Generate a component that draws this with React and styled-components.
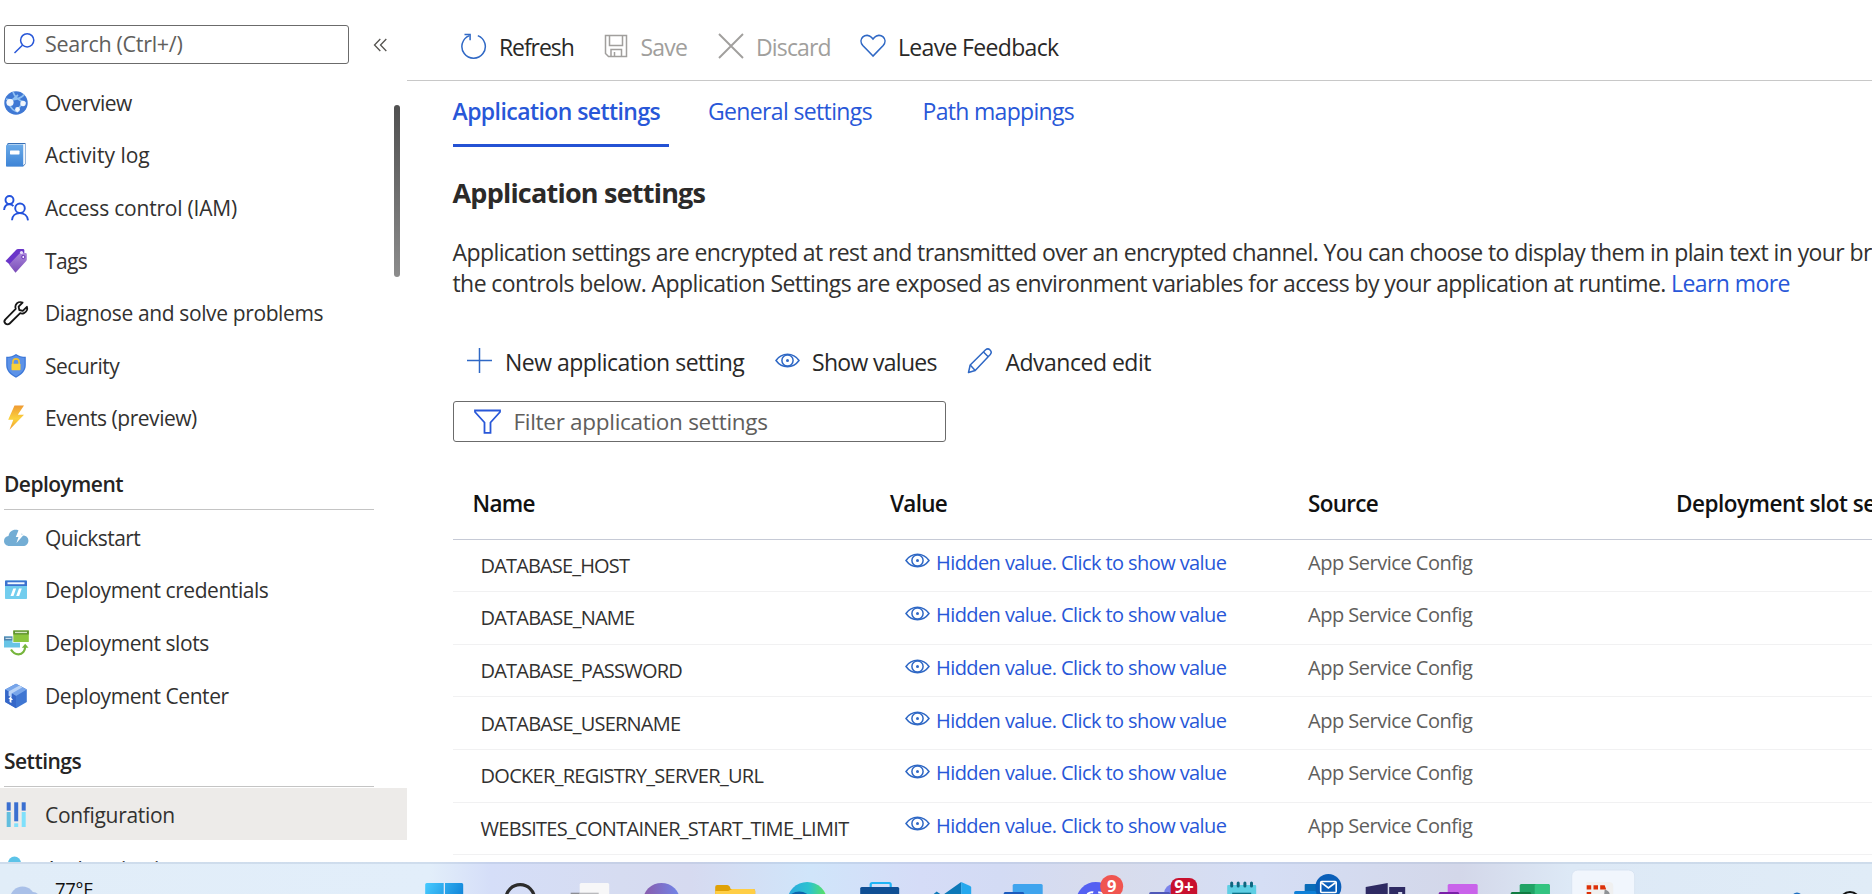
import React from "react";
import styled, { createGlobalStyle } from "styled-components";

const BLUE = "#2857d8";
const ICON_BLUE = "#2f68c5";

const Global = createGlobalStyle`
  * { box-sizing: border-box; }
  html, body { margin: 0; padding: 0; background: #fff; overflow: hidden; }
  body { font-family: "Open Sans", "Noto Sans", sans-serif; color: #323130; }
  svg { display: block; flex: none; }
`;

const Screen = styled.div`
  width: 1872px;
  height: 894px;
  display: flex;
  flex-direction: column;
  overflow: hidden;
`;
const Portal = styled.div`
  display: flex;
  height: 862px;
  overflow: hidden;
`;

/* ---------- sidebar ---------- */
const Sidebar = styled.nav`
  width: 406.5px;
  flex: none;
  display: flex;
  flex-direction: column;
`;
const SearchRow = styled.div`
  display: flex;
  align-items: center;
  gap: 24px;
  padding: 25px 0 0 4px;
  height: 64px;
  flex: none;
`;
const SearchBox = styled.div`
  width: 345px;
  height: 39px;
  border: 1.5px solid #6b6b6b;
  border-radius: 3px;
  display: flex;
  align-items: center;
  gap: 9.5px;
  padding: 0 0 1.5px 7.5px;
  font-size: 21.5px;
  letter-spacing: -0.014em;
  color: #605e5c;
`;
const MenuArea = styled.div`
  display: flex;
  flex: 1;
  min-height: 0;
  padding-top: 12.6px;
  overflow: hidden;
`;
const Menu = styled.div`
  width: 406.5px;
  flex: none;
`;
const ScrollThumb = styled.div`
  flex: none;
  width: 6px;
  height: 172px;
  margin: 28.5px 0 0 -12.5px;
  border-radius: 3px;
  background: linear-gradient(#505050, #8c8c8c);
`;
const MenuItem = styled.div`
  height: 52.6px;
  display: flex;
  align-items: center;
  gap: 17px;
  padding-left: 4px;
  padding-top: ${(p) => p.$drop || 0}px;
  font-size: 21px;
  letter-spacing: ${(p) => p.$ls || "-0.018em"};
  white-space: nowrap;
  background: ${(p) => (p.$active ? "#edebe9" : "transparent")};
`;
const MenuHeading = styled.div`
  height: ${(p) => p.$h}px;
  width: 370px;
  margin: 0 0 ${(p) => p.$gap}px 4px;
  padding-top: 25.5px;
  border-bottom: 1.5px solid #c4c4c4;
  font-size: 21px;
  line-height: 28px;
  font-weight: 600;
  letter-spacing: -0.025em;
  color: #252423;
`;

/* ---------- main ---------- */
const Main = styled.main`
  flex: 1;
  min-width: 0;
  overflow: hidden;
`;
const Toolbar = styled.div`
  height: 80.5px;
  border-bottom: 1.5px solid #c8c8c8;
  padding: 14px 0 0 53px;
  display: flex;
  align-items: center;
  svg { margin-bottom: 1.5px; }
`;
const Command = styled.div`
  display: flex;
  align-items: center;
  gap: ${(p) => p.$gap || 12.5}px;
  width: ${(p) => p.$w}px;
  flex: none;
  font-size: 23px;
  letter-spacing: ${(p) => p.$ls};
  white-space: nowrap;
  color: ${(p) => (p.$disabled ? "#a19f9d" : "#292827")};
`;
const Content = styled.div`
  padding-left: 46px;
`;
const Tabs = styled.div`
  display: flex;
  height: 66.5px;
`;
const Tab = styled.div`
  width: ${(p) => p.$w}px;
  margin-right: ${(p) => p.$mr || 0}px;
  padding-top: 14.5px;
  line-height: 32px;
  font-size: 23px;
  white-space: nowrap;
  color: ${BLUE};
  font-weight: ${(p) => (p.$active ? 600 : 400)};
  letter-spacing: ${(p) => p.$ls};
  border-bottom: 3px solid ${(p) => (p.$active ? "#2452d4" : "transparent")};
`;
const Title = styled.h2`
  margin: 26px 0 0;
  font-size: 27px;
  line-height: 40px;
  font-weight: 700;
  letter-spacing: -0.029em;
  color: #2b2a29;
`;
const Description = styled.div`
  margin-top: 24px;
  font-size: 23px;
  line-height: 30.8px;
  letter-spacing: -0.0256em;
  white-space: nowrap;
`;
const Link = styled.a`
  color: ${BLUE};
`;
const Actions = styled.div`
  display: flex;
  align-items: center;
  height: 40px;
  margin-top: 43px;
  padding-left: 14px;
  svg { margin-bottom: 1.5px; }
`;
const FilterBox = styled.div`
  width: 493.5px;
  height: 41px;
  margin-top: 19px;
  border: 1.5px solid #6b6b6b;
  border-radius: 3px;
  display: flex;
  align-items: center;
  gap: 13px;
  padding-left: 20px;
  font-size: 22.5px;
  letter-spacing: -0.013em;
  color: #605e5c;
`;
const Row = styled.div`
  display: grid;
  grid-template-columns: 437.5px 418px 368px 1fr;
  align-items: center;
  height: 52.6px;
  border-bottom: 1.5px solid #f1f1f2;
  font-size: 20px;
  white-space: nowrap;
`;
const HeadRow = styled(Row)`
  height: 98px;
  padding-top: 27px;
  border-bottom: 1.5px solid #c6cad6;
  font-size: 22.5px;
  font-weight: 600;
  letter-spacing: -0.032em;
  color: #111;
`;
const HeadName = styled.div`
  padding-left: 20px;
`;
const HeadSlot = styled.div`
  letter-spacing: -0.022em;
`;
const NameCell = styled.div`
  padding-left: 28px;
  letter-spacing: ${(p) => p.$ls};
`;
const ValueCell = styled.div`
  display: flex;
  align-items: center;
  gap: 6.5px;
  padding: 0 0 6px 14.5px;
  color: ${BLUE};
  letter-spacing: -0.029em;
  svg { margin-bottom: 3px; }
`;
const SourceCell = styled.div`
  padding-bottom: 6px;
  letter-spacing: -0.0245em;
  color: #605e5c;
`;

/* ---------- taskbar ---------- */
const Taskbar = styled.footer`
  height: 32px;
  display: flex;
  overflow: hidden;
  background: linear-gradient(90deg, #e1edf8 0, #e2eefa 430px, #d5def8 490px, #d6dcf1 620px, #d6daf0 690px,
    #d0e5fa 810px, #d5dcf7 920px, #d3dbf4 1000px, #d8dcec 1110px, #d5def5 1260px, #d3d7e9 1460px, #dde9f6 1570px, #e0ecf7 1872px);
  box-shadow: inset 0 2px 0 rgba(150, 170, 200, 0.25);
`;
const Weather = styled.div`
  width: 408.3px;
  flex: none;
  display: flex;
  gap: 17px;
  padding-left: 11px;
  font-size: 18.5px;
  line-height: 24px;
  letter-spacing: -0.015em;
  color: #111;
`;
const Temperature = styled.span`
  padding-top: 15px;
`;
const Apps = styled.div`
  display: flex;
  flex: none;
`;
const Tray = styled.div`
  flex: 1;
  display: flex;
  justify-content: flex-end;
  padding-right: 10px;
`;

/* ---------- line icons ---------- */
const Search = () => (
  <svg width="23" height="23" viewBox="0 0 23 23" fill="none" stroke={BLUE} strokeWidth="1.5">
    <circle cx="14.2" cy="8.3" r="6.6" />
    <path d="M9.4 13.2 1.5 21" />
  </svg>
);
const Collapse = () => (
  <svg width="15" height="14" viewBox="0 0 15 14" fill="none" stroke="#55534f" strokeWidth="1.3">
    <path d="M7.3 1 1.5 7l5.8 6M13.3 1 7.5 7l5.8 6" />
  </svg>
);
const Refresh = () => (
  <svg width="27" height="27" viewBox="0 0 27 27" fill="none" stroke={ICON_BLUE} strokeWidth="1.5">
    <path d="M9.400 2.600A11.700 11.700 0 1 0 17.800 2.600" />
    <path d="M4.500 1.500h5.600v5.800" />
  </svg>
);
const Save = () => (
  <svg width="24" height="24" viewBox="0 0 24 24" fill="none" stroke="#a19f9d" strokeWidth="1.5">
    <path d="M1.500 1.500h21v21H4.500l-3-3z" />
    <path d="M5.500 1.500v10h13v-10M7 22.500v-7h10.500v7M10.500 18v4" />
  </svg>
);
const Cross = () => (
  <svg width="26" height="26" viewBox="0 0 26 26" fill="none" stroke="#a19f9d" strokeWidth="1.9">
    <path d="M1 1l24 24M25 1 1 25" />
  </svg>
);
const Heart = () => (
  <svg width="26" height="24" viewBox="0 0 26 24" fill="none" stroke={ICON_BLUE} strokeWidth="1.6">
    <path d="M13 22 2.800 11.500C.3 8.600.6 5 2.900 2.900 5.500.6 9.200.9 11.400 3.300L13 5l1.600-1.700c2.200-2.400 5.900-2.700 8.500-.4 2.300 2.100 2.600 5.700.1 8.600z" />
  </svg>
);
const Plus = () => (
  <svg width="25" height="25" viewBox="0 0 25 25" fill="none" stroke={ICON_BLUE} strokeWidth="1.5">
    <path d="M12.500 0v25M0 12.500h25" />
  </svg>
);
const Eye = () => (
  <svg width="25" height="15" viewBox="0 0 25 15" fill="none" stroke={ICON_BLUE} strokeWidth="1.5">
    <path d="M1 7.500C4 3.300 8 1.300 12.500 1.300S21 3.300 24 7.500c-3 4.200-7 6.200-11.500 6.200S4 11.700 1 7.500z" />
    <circle cx="12.500" cy="7.500" r="5.600" />
    <circle cx="12.500" cy="7.500" r="1.500" fill={ICON_BLUE} stroke="none" />
  </svg>
);
const Pencil = () => (
  <svg width="26" height="26" viewBox="0 0 26 26" fill="none" stroke={ICON_BLUE} strokeWidth="1.500" strokeLinejoin="round">
    <path d="M1.500 24.500 3.200 17 18.600 1.800c1.400-1.200 3.300-1 4.500.2s1.400 3.100.2 4.500L8.200 22.500z" />
    <path d="M3.200 17l5 5.500M16.500 4l4.700 4.800" />
  </svg>
);
const Funnel = () => (
  <svg width="27" height="25" viewBox="0 0 27 25" fill="none" stroke={BLUE} strokeWidth="1.800">
    <path d="M1 1.500h25v1.500L16.500 13.500v10.300h-6V13.500L1 3z" />
  </svg>
);

/* ---------- menu icons ---------- */
const Glyph = ({ children }) => (
  <svg width="24" height="24" viewBox="0 0 24 24" fill="none" overflow="visible">
    {children}
  </svg>
);
const Globe = () => (
  <Glyph>
    <circle cx="12" cy="12" r="11.700" fill="#3f78d4" />
    <path d="M2 8C8 10 17 8 20 3.500M9 1c2 6 6 9 13 11M5 13c2 5 5 7 9 8M6 11l8-7M13 19l6-7" stroke="#8fc0f2" strokeWidth="1.700" />
    <circle cx="6" cy="11.500" r="3.600" fill="#f2f6fc" />
    <circle cx="19" cy="12.500" r="2.700" fill="#f2f6fc" />
    <circle cx="13.500" cy="18.500" r="2.400" fill="#f2f6fc" />
  </Glyph>
);
const Log = () => (
  <Glyph>
    <defs>
      <linearGradient id="log" x1="0" y1="0" x2="0" y2="1">
        <stop stopColor="#6aaae8" />
        <stop offset="1" stopColor="#3e84d6" />
      </linearGradient>
    </defs>
    <path d="M3 2Q3 .1 4.500.1H21.500V21l-2 2.300H3z" fill="#376fb6" />
    <path d="M4 1h17v19.500l-1.500 2z" fill="#f4f7fb" />
    <path d="M2 3Q2 1.500 3.500 1.500H19.200V23.500H2z" fill="url(#log)" />
    <rect x="6" y="7.600" width="9.500" height="3.800" rx=".6" fill="#fff" />
  </Glyph>
);
const People = () => (
  <Glyph>
    <g stroke="#2352dc" strokeWidth="1.900">
      <circle cx="5.500" cy="4" r="4" />
      <path d="M.1 14C.4 10.500 2.500 8.300 5.400 8.300c1.700 0 3 .7 4 1.800" />
      <circle cx="16" cy="12.300" r="4.800" />
      <path d="M8 24.300c.3-4.500 3.500-7.200 7.800-7.200s7.700 2.700 8.200 7.200" />
    </g>
  </Glyph>
);
const Tag = () => (
  <Glyph>
    <defs>
      <linearGradient id="tag" x1="0" y1="0" x2="0" y2="1">
        <stop stopColor="#a987da" />
        <stop offset="1" stopColor="#7a4bb8" />
      </linearGradient>
    </defs>
    <path d="M1.500 12 12.500.5Q13 0 14 0h5q1.300 0 1.300 1.300V7L10 19z" fill="#6a35c9" />
    <path d="M5 15.500 15.500 4.500Q16.200 4 17 4h4.500q1.300 0 1.300 1.300V10.500q0 .8-.6 1.400L11.500 23.800z" fill="url(#tag)" />
    <circle cx="17.500" cy="3.500" r="1.600" fill="#e8dcfa" />
    <circle cx="19.300" cy="8" r="1.600" fill="#f2e9ff" stroke="#6730b8" />
  </Glyph>
);
const WrenchIcon = () => (
  <Glyph>
    <path
      d="M22.900 5.800 18.800 9.800 15.300 9 14.600 5.600 18.600 1.500C15.800.4 12.800 1.500 11.700 4.200c-.5 1.300-.5 2.500 0 3.700L1.400 18.300c-1.200 1.200-1.200 3 0 4.200s3.100 1.200 4.300 0L16.200 12.200c1.300.5 2.500.5 3.800-.1 2.600-1.200 3.800-3.900 2.900-6.300z"
      stroke="#151515"
      strokeWidth="1.800"
      strokeLinejoin="round"
    />
  </Glyph>
);
const Shield = () => (
  <Glyph>
    <path d="M12 0c2.800 2 6 2.800 9.800 2.800V11c0 6-4 9.700-9.800 12.800C6.200 20.700 2.200 17 2.200 11V2.800C6 2.800 9.200 2 12 0z" fill="#3d78d8" />
    <path d="M12 1.400c2.600 1.700 5.300 2.400 8.500 2.500V11c0 5.200-3.400 8.500-8.500 11.300C6.900 19.500 3.500 16.200 3.500 11V3.900C6.700 3.800 9.400 3.100 12 1.400z" fill="#5c92e8" />
    <path d="M8.900 10.500V8a3.100 3.100 0 0 1 6.200 0v2.500" stroke="#f2c230" strokeWidth="1.600" />
    <rect x="7.500" y="9.800" width="9" height="6.400" rx=".7" fill="#f7d03c" />
  </Glyph>
);
const Bolt = () => (
  <Glyph>
    <defs>
      <linearGradient id="bolt" x1="0" y1="0" x2="0" y2="1">
        <stop stopColor="#ef9a33" />
        <stop offset=".55" stopColor="#fbd23c" />
        <stop offset="1" stopColor="#f09a30" />
      </linearGradient>
    </defs>
    <path d="M10.500-.5H20L13.800 8.800H20L5.500 23.800 9.300 13.800H4.200z" fill="url(#bolt)" />
  </Glyph>
);
const Cloud = () => (
  <Glyph>
    <path d="M5.500 20C2.200 20 0 17.800 0 15s2-4.800 4.500-5C5 6 8 3.700 11.500 3.700c4 0 6.500 2.300 7.300 5.800 3.500 0 5.600 2.200 5.600 5.200s-2.300 5.300-5.500 5.300z" fill="#73add4" />
    <path d="M15 3h5L17.300 8.500H20L12.500 17l1.900-6H11.800z" fill="#fff" />
  </Glyph>
);
const Credentials = () => (
  <Glyph>
    <rect x="1" y="2.500" width="22" height="18.500" rx=".8" fill="#72cdee" />
    <path d="M1 3.300Q1 2.500 1.800 2.500H22.200q.8 0 .8.800V8H1z" fill="#3a72cf" />
    <rect x="3.500" y="4.300" width="17" height="1.900" fill="#f4f9ff" />
    <path d="M9.300 10.500h2.800L9.500 18H6.500zM15 10.500h2.800L15.200 18h-3z" fill="#fff" />
  </Glyph>
);
const Slots = () => (
  <Glyph>
    <rect x="0" y="5.500" width="16" height="11" fill="#68c4e6" />
    <rect x="0" y="5.500" width="9" height="4" fill="#4f84ad" />
    <rect x="1.500" y="6.800" width="6" height="1.200" fill="#c7dcea" />
    <rect x="8.500" y="-1.300" width="17" height="13" fill="#fff" />
    <rect x="9.300" y="-.5" width="15.500" height="11.500" fill="#8cc63f" />
    <rect x="9.300" y="-.5" width="15.500" height="4" fill="#5f9130" />
    <rect x="11" y=".8" width="12" height="1.300" fill="#d6e8c4" />
    <path d="M7 18.500c2 3.500 4.500 4.800 7.500 4.800 4 0 6.500-3.300 6.800-8" stroke="#76b53c" strokeWidth="2.200" />
    <path d="M17.800 16.800 21.200 12.800 24.500 16.800z" fill="#76b53c" />
  </Glyph>
);
const Box = () => (
  <Glyph>
    <path d="M12-.3 22.800 5.500V18L12 24.300 1.200 18V5.500z" fill="#3f76d2" />
    <path d="M12-.3 22.800 5.500 12 12 1.200 5.500z" fill="#77a5ea" />
    <path d="M1.200 5.500 12 12V24.300L1.200 18z" fill="#3567c8" />
    <path d="M4.600 7.500 15.500 1.600l3 1.600L7.700 9.400v4.200l-3.100-1.800z" fill="#b9d3f7" />
    <path d="M6.500 12.500 9 16H7.400v3l-1.800-.9V15H4.300z" fill="#fff" />
  </Glyph>
);
const Sliders = () => (
  <Glyph>
    <rect x="2.700" y="-.7" width="4" height="8.300" fill="#3a6fd0" />
    <rect x="2.700" y="9" width="4" height="15" fill="#62bede" />
    <rect x="10.200" y="-.7" width="4" height="19" fill="#3a6fd0" />
    <rect x="10.200" y="20.300" width="4" height="3.700" fill="#7fe0fb" />
    <rect x="17.700" y="-.7" width="4" height="8.300" fill="#3a6fd0" />
    <rect x="17.700" y="9" width="4" height="15" fill="#7fe0fb" />
  </Glyph>
);
const User = () => (
  <Glyph>
    <circle cx="10.500" cy="6" r="6.500" fill="#5cc3e8" />
    <path d="M1 24c0-6 4-9 9.500-9s9.500 3 9.500 9z" fill="#3f8fd6" />
  </Glyph>
);

/* ---------- taskbar app icons, origin at the slot's centre ---------- */
const Slot = ({ children }) => (
  <svg width="72.4" height="32" viewBox="-36.2 0 72.4 32" fill="none">
    {children}
  </svg>
);
const BadgeText = styled.text`
  font: 700 ${(p) => p.$size}px "Open Sans", sans-serif;
  fill: #fff;
  text-anchor: middle;
`;
const OfficeApp = ({ light, lighter, dark }) => (
  <Slot>
    <rect x="-10.500" y="22" width="30" height="20" rx="1.500" fill={light} />
    {lighter && <rect x="4.500" y="22" width="15" height="20" rx="1.500" fill={lighter} />}
    <rect x="-19.500" y="30" width="20.500" height="10" rx="1.500" fill={dark} />
  </Slot>
);
const TaskbarApps = () => (
  <Apps>
    <Slot>
      <defs>
        <linearGradient id="win" x1="-19" x2="19" y1="20" y2="40" gradientUnits="userSpaceOnUse">
          <stop stopColor="#47cbff" />
          <stop offset="1" stopColor="#0c7fd6" />
        </linearGradient>
      </defs>
      <path d="M-19 22.500q0-1.500 1.500-1.500H-.5V40H-19zM.8 21H17.500q1.500 0 1.500 1.500V40H.8z" fill="url(#win)" />
    </Slot>
    <Slot>
      <circle cx="3" cy="37" r="14.300" stroke="#2c2c2c" strokeWidth="3.200" />
    </Slot>
    <Slot>
      <rect x="-18.500" y="30.700" width="28" height="6" fill="#8b8d94" />
      <rect x="-9.500" y="21" width="29.500" height="20" rx="1.500" fill="#f7f7f8" />
      <rect x="-9.500" y="30.700" width="19" height="2" fill="#b9babd" />
    </Slot>
    <Slot>
      <defs>
        <linearGradient id="chat" x1="-18" x2="18" y1="0" y2="0" gradientUnits="userSpaceOnUse">
          <stop stopColor="#8a5bab" />
          <stop offset="1" stopColor="#7185e8" />
        </linearGradient>
      </defs>
      <circle cx=".3" cy="39.500" r="18.600" fill="url(#chat)" />
    </Slot>
    <Slot>
      <path d="M-19 25q0-2 2-2H-7q1.500 0 2.500 1.500L-3.500 27H19q2 0 2 2v8h-40z" fill="#e0a106" />
      <path d="M-19 29H-6l4-2H19q2 0 2 2v8h-40z" fill="#ffce45" />
    </Slot>
    <Slot>
      <defs>
        <linearGradient id="edge" x1="-18" x2="20" y1="0" y2="0" gradientUnits="userSpaceOnUse">
          <stop stopColor="#2aa9e0" />
          <stop offset=".55" stopColor="#2bc3cf" />
          <stop offset="1" stopColor="#5be35e" />
        </linearGradient>
      </defs>
      <circle cx="1" cy="40" r="20" fill="url(#edge)" />
      <ellipse cx="-7" cy="36" rx="10" ry="6.500" fill="#0d64ad" />
    </Slot>
    <Slot>
      <path d="M-8.500 26v-3.500q0-1.500 1.500-1.500H10q1.500 0 1.500 1.500V26" stroke="#1fb4f5" strokeWidth="2.200" />
      <rect x="-19" y="25" width="39" height="12" rx="1.500" fill="#0f4f94" />
    </Slot>
    <Slot>
      <path d="M-17.500 32-14.500 29.500-11 32zM-7 32 10 20V32z" fill="#0d78b8" />
      <path d="M10 20 19 24q1 .5 1 1.500V32H10z" fill="#25a8ee" />
    </Slot>
    <OfficeApp light="#3fa4ee" dark="#1b5bbd" />
    <Slot>
      <circle cx="-.5" cy="39.500" r="19.500" fill="#5460f2" />
      <path d="M-9 32q4-2.500 6-1.500M2 30.500q3-.5 6 1.500" stroke="#fff" strokeWidth="2" />
      <circle cx="15.500" cy="24.500" r="11.500" fill="#f05550" />
      <BadgeText $size={16.5} x="15.500" y="30.3">9</BadgeText>
    </Slot>
    <Slot>
      <circle cx="5" cy="31" r="9" fill="#7b83eb" />
      <rect x="-19" y="30" width="21" height="8" rx="1.500" fill="#4e57b8" />
      <rect x="2.500" y="16" width="26.500" height="24" rx="8" fill="#c8102e" />
      <BadgeText $size={17} x="15.700" y="31">9+</BadgeText>
    </Slot>
    <Slot>
      <rect x="-14" y="23" width="29" height="12" rx="1" fill="#5fcfe4" />
      <path d="M-9.500 21v3M-3 21v3M3.700 21v3M10.300 21v3" stroke="#0f6780" strokeWidth="3" strokeLinecap="round" />
      <rect x="-9" y="30.700" width="19" height="2" fill="#0b7189" />
    </Slot>
    <Slot>
      <rect x="-8.500" y="22" width="22" height="12" rx="1" fill="#0a6cb8" />
      <rect x="-19" y="29" width="22" height="8" rx="1.500" fill="#0f80d8" />
      <circle cx="15.200" cy="25" r="13" fill="#0a5eb8" />
      <rect x="7.500" y="19.500" width="15.500" height="11" rx="1" stroke="#fff" strokeWidth="1.600" />
      <path d="M8 20.500l7.200 5.500 7.300-5.500" stroke="#fff" strokeWidth="1.600" />
    </Slot>
    <Slot>
      <path d="M-19.500 25 2.500 21V32h-22zM4 25H20v7h-3v-2h-4v2H4z" fill="#2e2a63" />
    </Slot>
    <OfficeApp light="#c963ea" dark="#7a1fa8" />
    <OfficeApp light="#21a366" lighter="#33c481" dark="#107c41" />
    <Slot>
      <rect x="-31.500" y="8" width="63" height="40" rx="6" fill="#f1f6fd" stroke="#d9e4f2" />
      <path d="M-17 21Q-17 20 -16 20H6q4 0 4 4v10h-27z" fill="#f0f0f0" />
      <path d="M-16.500 23.300h4.500v4.200h-4.500zM-9.700 23.300h4.500v4.200h-4.500zM-3 23.300H1.500l1.500 4.200H-3zM-16.500 30h4.500v4h-4.500z" fill="#dd3108" />
      <path d="M1.500 27.500q4.500 1 5 4.500H1z" fill="#8e9295" />
    </Slot>
  </Apps>
);

const topItems = [
  ["Overview", Globe, "-0.026em"],
  ["Activity log", Log, "0"],
  ["Access control (IAM)", People, "-0.01em"],
  ["Tags", Tag, "-0.03em"],
  ["Diagnose and solve problems", WrenchIcon, "-0.018em"],
  ["Security", Shield, "-0.023em"],
  ["Events (preview)", Bolt, "-0.022em"],
];
const deployItems = [
  ["Quickstart", Cloud, "-0.027em"],
  ["Deployment credentials", Credentials, "-0.021em"],
  ["Deployment slots", Slots, "-0.021em"],
  ["Deployment Center", Box, "-0.021em"],
];
const settings = [
  ["DATABASE_HOST", "-0.042em"],
  ["DATABASE_NAME", "-0.039em"],
  ["DATABASE_PASSWORD", "-0.039em"],
  ["DATABASE_USERNAME", "-0.039em"],
  ["DOCKER_REGISTRY_SERVER_URL", "-0.035em"],
  ["WEBSITES_CONTAINER_START_TIME_LIMIT", "-0.035em"],
];

const Items = ({ list }) =>
  list.map(([label, Icon, tracking]) => (
    <MenuItem key={label} $ls={tracking}>
      <Icon />
      {label}
    </MenuItem>
  ));

export default function App() {
  return (
    <Screen>
      <Global />
      <Portal>
        <Sidebar>
          <SearchRow>
            <SearchBox>
              <Search />
              Search (Ctrl+/)
            </SearchBox>
            <Collapse />
          </SearchRow>
          <MenuArea>
            <Menu>
              <Items list={topItems} />
              <MenuHeading $h={65.2} $gap={1.5}>Deployment</MenuHeading>
              <Items list={deployItems} />
              <MenuHeading $h={65.5} $gap={0.5}>Settings</MenuHeading>
              <MenuItem $active $drop={2} $ls="-0.015em">
                <Sliders />
                Configuration
              </MenuItem>
              <MenuItem $drop={4}>
                <User />
                Authentication
              </MenuItem>
            </Menu>
            <ScrollThumb />
          </MenuArea>
        </Sidebar>
        <Main>
          <Toolbar>
            <Command $w={144.5} $ls="-0.047em">
              <Refresh />
              Refresh
            </Command>
            <Command $w={113.5} $disabled $ls="-0.036em">
              <Save />
              Save
            </Command>
            <Command $w={142} $disabled $ls="-0.037em">
              <Cross />
              Discard
            </Command>
            <Command $w={220} $ls="-0.029em">
              <Heart />
              Leave Feedback
            </Command>
          </Toolbar>
          <Content>
            <Tabs>
              <Tab $active $w={216} $mr={39.5} $ls="-0.025em">Application settings</Tab>
              <Tab $w={214.5} $ls="-0.028em">General settings</Tab>
              <Tab $w={180} $ls="-0.03em">Path mappings</Tab>
            </Tabs>
            <Title>Application settings</Title>
            <Description>
              <div>
                Application settings are encrypted at rest and transmitted over an encrypted channel. You can choose to display them in plain text in your browser
              </div>
              <div>
                the controls below. Application Settings are exposed as environment variables for access by your application at runtime.{" "}
                <Link>Learn more</Link>
              </div>
            </Description>
            <Actions>
              <Command $w={308} $gap={13.5} $ls="-0.022em">
                <Plus />
                New application setting
              </Command>
              <Command $w={192.5} $ls="-0.03em">
                <Eye />
                Show values
              </Command>
              <Command $w={190} $ls="-0.022em">
                <Pencil />
                Advanced edit
              </Command>
            </Actions>
            <FilterBox>
              <Funnel />
              Filter application settings
            </FilterBox>
            <HeadRow>
              <HeadName>Name</HeadName>
              <div>Value</div>
              <div>Source</div>
              <HeadSlot>Deployment slot setting</HeadSlot>
            </HeadRow>
            {settings.map(([name, tracking]) => (
              <Row key={name}>
                <NameCell $ls={tracking}>{name}</NameCell>
                <ValueCell>
                  <Eye />
                  Hidden value. Click to show value
                </ValueCell>
                <SourceCell>App Service Config</SourceCell>
              </Row>
            ))}
          </Content>
        </Main>
      </Portal>
      <Taskbar>
        <Weather>
          <svg width="27" height="32" viewBox="0 0 27 32">
            <circle cx="11.500" cy="37" r="12.500" fill="#a9c0e8" />
            <circle cx="22" cy="37" r="7" fill="#a9c0e8" />
          </svg>
          <Temperature>77°F</Temperature>
        </Weather>
        <TaskbarApps />
        <Tray>
          <svg width="80" height="32" viewBox="0 0 80 32" fill="none">
            <circle cx="15" cy="36" r="5.500" fill="#1f6fc0" />
            <circle cx="68" cy="40" r="10" stroke="#111" strokeWidth="2" />
          </svg>
        </Tray>
      </Taskbar>
    </Screen>
  );
}
